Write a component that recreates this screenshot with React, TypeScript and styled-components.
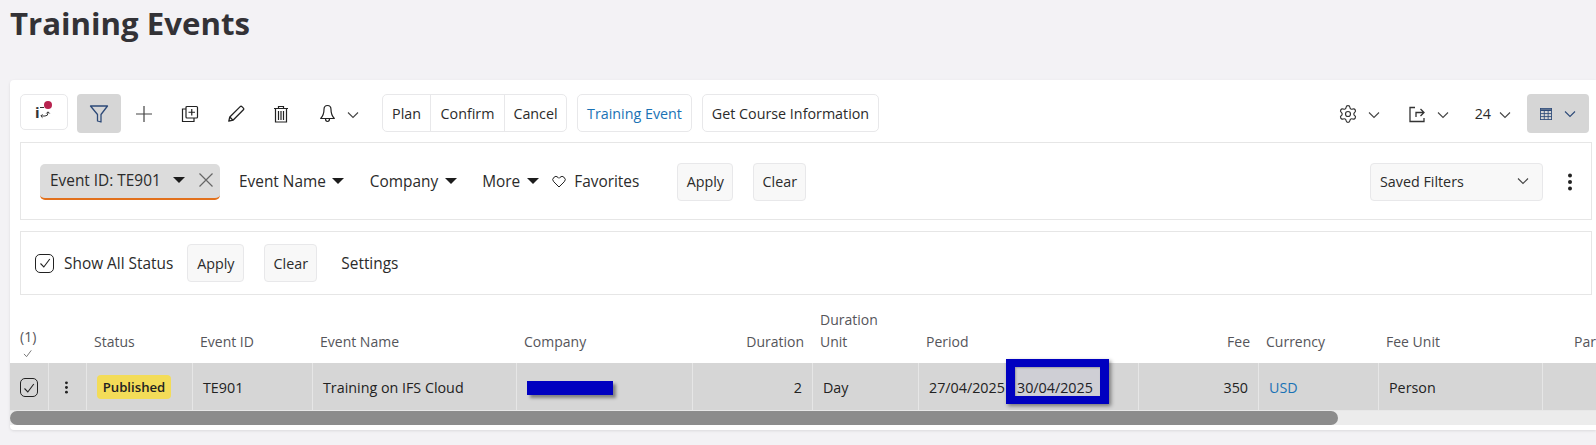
import React from "react";
import styled, { createGlobalStyle } from "styled-components";
import { Settings } from "lucide-react";

const Global = createGlobalStyle`
  html, body { margin: 0; padding: 0; background: #f3f2f5; overflow: hidden; }
  body { font-family: "Open Sans", "Liberation Sans", sans-serif; color: #2b2b2b; }
  * { box-sizing: border-box; }
`;

const Page = styled.div`
  width: 1596px;
  height: 445px;
  overflow: hidden;
`;
const Title = styled.h1`
  margin: 0;
  padding: 2px 0 0 10px;
  height: 80px;
  font-size: 31.2px;
  line-height: 42px;
  font-weight: 700;
  color: #333236;
`;
const Card = styled.section`
  margin-left: 10px;
  height: 350px;
  background: #fff;
  border-radius: 4px 0 0 4px;
  box-shadow: 0 1px 3px rgba(0, 0, 0, 0.1);
  padding: 14px 4px 0 10px;
`;
const Toolbar = styled.div`
  display: flex;
  align-items: flex-start;
  height: 39px;
  padding-right: 3px;
`;
const LogoButton = styled.div`
  width: 48px;
  height: 36px;
  margin-right: 9px;
  border: 1px solid #e8e8ea;
  border-radius: 5px;
  display: flex;
  align-items: center;
  justify-content: center;
`;
const FilterToggle = styled.div`
  width: 44px;
  height: 39px;
  background: #d6d6d6;
  border-radius: 4px;
  display: flex;
  align-items: center;
  justify-content: center;
`;
const IconButton = styled.div<{ $w?: number }>`
  width: ${(p) => p.$w ?? 46}px;
  height: 39px;
  display: flex;
  align-items: center;
  justify-content: center;
  color: #333;
`;
const ChevronBox = styled.span<{ $ml?: number; $mr?: number }>`
  display: inline-flex;
  align-items: center;
  width: 14px;
  height: 39px;
  margin-left: ${(p) => p.$ml ?? 0}px;
  margin-right: ${(p) => p.$mr ?? 0}px;
  padding-top: 2px;
`;
const ButtonGroup = styled.div`
  display: flex;
  height: 38px;
  border: 1px solid #e8e8ea;
  border-radius: 5px;
`;
const GroupItem = styled.div<{ $w: number }>`
  width: ${(p) => p.$w}px;
  display: flex;
  align-items: center;
  justify-content: center;
  font-size: 14.3px;
  color: #2b2b2b;
  & + & {
    border-left: 1px solid #e8e8ea;
  }
`;
const ActionButton = styled.div<{ $w: number; $link?: boolean }>`
  width: ${(p) => p.$w}px;
  height: 38px;
  margin-left: 10px;
  border: 1px solid #e8e8ea;
  border-radius: 5px;
  display: flex;
  align-items: center;
  justify-content: center;
  font-size: 14.3px;
  color: ${(p) => (p.$link ? "#1a72b5" : "#2b2b2b")};
`;
const RightTools = styled.div`
  margin-left: auto;
  display: flex;
  align-items: center;
  height: 39px;
`;
const PageSize = styled.span`
  font-size: 14.3px;
  margin-right: 7px;
`;
const ViewToggle = styled.div`
  width: 62px;
  height: 39px;
  margin-left: 15px;
  padding-left: 13px;
  background: #d6d6d6;
  border-radius: 4px;
  display: flex;
  align-items: center;
  gap: 11px;
`;
const Panel = styled.div<{ $h: number; $mt: number; $pl: number; $pt?: number }>`
  height: ${(p) => p.$h}px;
  margin-top: ${(p) => p.$mt}px;
  padding-left: ${(p) => p.$pl}px;
  padding-top: ${(p) => p.$pt ?? 0}px;
  border: 1px solid #e6e6e6;
  display: flex;
  align-items: center;
  font-size: 15.4px;
`;
const Chip = styled.div`
  width: 180px;
  height: 36px;
  padding: 0 0 2px 10px;
  display: flex;
  align-items: center;
  background: #dcdcdc;
  border-bottom: 2px solid #e2711d;
  border-radius: 5px;
  white-space: nowrap;
`;
const Caret = styled.span<{ $ml: number }>`
  display: inline-block;
  margin-left: ${(p) => p.$ml}px;
  width: 0;
  height: 0;
  border-left: 6px solid transparent;
  border-right: 6px solid transparent;
  border-top: 6px solid #1c1c1c;
`;
const FilterItem = styled.span<{ $ml: number; $lift?: boolean }>`
  display: inline-flex;
  align-items: center;
  margin-left: ${(p) => p.$ml}px;
  padding-bottom: ${(p) => (p.$lift ? 2 : 0)}px;
  white-space: nowrap;
`;
const FavoriteLabel = styled.span`
  margin-left: 8px;
`;
const FlatButton = styled.div<{ $w: number; $ml: number; $lift?: boolean }>`
  width: ${(p) => p.$w}px;
  height: 38px;
  margin-left: ${(p) => p.$ml}px;
  padding-bottom: ${(p) => (p.$lift ? 2 : 0)}px;
  background: #f8f8f8;
  border: 1px solid #e8e8ea;
  border-radius: 4px;
  display: flex;
  align-items: center;
  justify-content: center;
  font-size: 14.3px;
`;
const SavedFilters = styled.div`
  margin-left: auto;
  width: 173px;
  height: 38px;
  padding: 0 12px 2px 9px;
  background: #f8f8f8;
  border: 1px solid #e8e8ea;
  border-radius: 4px;
  display: flex;
  align-items: center;
  justify-content: space-between;
  font-size: 14.3px;
`;
const PanelKebab = styled.div`
  width: 48px;
  display: flex;
  justify-content: center;
  padding-left: 6px;
`;
const CheckBox = styled.span`
  width: 19px;
  height: 19px;
  border: 1.3px solid #222;
  border-radius: 5px;
  display: inline-flex;
  align-items: center;
  justify-content: center;
  background: transparent;
`;
const ShowAll = styled.span`
  margin-left: 10px;
  white-space: nowrap;
`;

const columns = "38px 38px 106px 120px 204px 176px 120px 106px 220px 120px 120px 164px 54px";

const Table = styled.div`
  margin: 0 -4px 0 -10px;
`;
const HeaderRow = styled.div`
  display: grid;
  grid-template-columns: ${columns};
  height: 68px;
`;
const HeaderCell = styled.div<{ $right?: boolean; $pl?: number }>`
  align-self: end;
  padding: 0 8px 10px ${(p) => p.$pl ?? 8}px;
  font-size: 14px;
  line-height: 22px;
  color: #55555a;
  text-align: ${(p) => (p.$right ? "right" : "left")};
  white-space: nowrap;
`;
const CountCell = styled.div`
  align-self: end;
  padding: 0 0 4px 10px;
  font-size: 14px;
  line-height: 22px;
  color: #55555a;
`;
const CountTick = styled.div`
  padding-left: 2px;
  height: 11px;
  display: flex;
  align-items: flex-start;
`;
const Row = styled.div`
  display: grid;
  grid-template-columns: ${columns};
  height: 48px;
  background: #d6d6d6;
  border-bottom: 1px solid #e8e8e8;
`;
const Cell = styled.div<{ $right?: boolean; $link?: boolean; $center?: boolean; $pl?: number }>`
  display: flex;
  align-items: center;
  justify-content: ${(p) => (p.$right ? "flex-end" : p.$center ? "center" : "flex-start")};
  padding: 2px 10px 0 ${(p) => p.$pl ?? 10}px;
  font-size: 14.3px;
  color: ${(p) => (p.$link ? "#1a72b5" : "#222")};
  white-space: nowrap;
  & + & {
    border-left: 1px solid #e6e6e6;
  }
`;
const Badge = styled.span`
  height: 24px;
  width: 74px;
  margin-bottom: 2px;
  flex: none;
  background: #f3dc58;
  border-radius: 4px;
  display: flex;
  align-items: center;
  justify-content: center;
  font-size: 13.2px;
  font-weight: 600;
  color: #222;
`;
const Redaction = styled.span`
  width: 86px;
  height: 14px;
  background: #0000c0;
  box-shadow: 3px 3px 3px rgba(0, 0, 0, 0.4);
`;
const DateText = styled.span`
  width: 88px;
  position: relative;
  flex: none;
`;
const Highlight = styled.span`
  position: absolute;
  left: -11px;
  top: -19px;
  width: 103px;
  height: 45px;
  background: rgba(0, 0, 192, 0.03);
  border: 8px solid #0000c0;
  border-width: 8px 9px;
  box-shadow: 2px 2px 4px rgba(0, 0, 0, 0.45), inset 1px 1px 2px rgba(0, 0, 0, 0.25);
`;
const ScrollTrack = styled.div`
  height: 14px;
  background: #ececec;
`;
const ScrollThumb = styled.div`
  width: 1328px;
  height: 14px;
  background: #8c8c8c;
  border-radius: 7px;
`;

const Chevron = ({ c = "#444" }: { c?: string }) => (
  <svg width="14" height="8" viewBox="0 0 14 8" fill="none" stroke={c} strokeWidth="1.1">
    <path d="M2 1.500 7 6.500l5-5" />
  </svg>
);
const Kebab = ({ h = 18 }: { h?: number }) => (
  <svg width={(h * 4) / 18} height={h} viewBox="0 0 4 18" fill="#222">
    <circle cx="2" cy="2.500" r="2" />
    <circle cx="2" cy="9" r="2" />
    <circle cx="2" cy="15.500" r="2" />
  </svg>
);
const Tick = ({ s = 14, c = "#222" }: { s?: number; c?: string }) => (
  <svg width={s} height={s} viewBox="0 0 14 14" fill="none" stroke={c} strokeWidth="1.1">
    <path d="M2.500 7.500 5.800 11 11.800 3" />
  </svg>
);

const header: { label: React.ReactNode; right?: boolean; pl?: number }[] = [
  { label: "Status", pl: 8 },
  { label: "Event ID" },
  { label: "Event Name" },
  { label: "Company" },
  { label: "Duration", right: true },
  { label: <>Duration<br />Unit</> },
  { label: "Period" },
  { label: "Fee", right: true },
  { label: "Currency" },
  { label: "Fee Unit" },
  { label: "Par", pl: 32 },
];

export default function App() {
  return (
    <Page>
      <Global />
      <Title>Training Events</Title>
      <Card>
        <Toolbar>
          <LogoButton>
            <svg width="24" height="24" viewBox="0 0 24 24" fill="none">
              <text x="3" y="18" fontFamily="Open Sans" fontWeight="700" fontSize="15" fill="#333">i</text>
              <path d="M8 7.500h4" stroke="#333" strokeWidth="1" />
              <path d="M9 16h4a3 3 0 0 0 3-3v-1M14.300 13.500l1.700-1.700 1.700 1.700M10.500 14.300 8.800 16l1.700 1.700" stroke="#333" strokeWidth="1" />
              <circle cx="16" cy="5" r="4" fill="#b8234f" />
            </svg>
          </LogoButton>
          <FilterToggle>
            <svg width="20" height="20" viewBox="0 0 20 20" fill="none" stroke="#2d4a78" strokeWidth="1.3" strokeLinejoin="round">
              <path d="M1.500 2h17L12 10.500V18l-3.500-1v-6.500z" />
            </svg>
          </FilterToggle>
          <IconButton>
            <svg width="18" height="18" viewBox="0 0 18 18" stroke="#444" strokeWidth="1.2">
              <path d="M9 1v16M1 9h16" />
            </svg>
          </IconButton>
          <IconButton>
            <svg width="18" height="18" viewBox="0 0 18 18" fill="none" stroke="#222" strokeWidth="1.2">
              <path d="M5 4H1.500v12.500H13V13" />
              <rect x="5" y="1.500" width="11.500" height="11.500" rx="1" />
              <path d="M10.750 4v6.500M7.500 7.250H14" />
            </svg>
          </IconButton>
          <IconButton $w={45}>
            <svg width="18" height="18" viewBox="0 0 18 18" fill="none" stroke="#222" strokeWidth="1.3" strokeLinejoin="round">
              <path d="M1.800 16.200 2.800 12 13.200 1.600a1.200 1.200 0 0 1 1.700 0l1.500 1.500a1.200 1.200 0 0 1 0 1.700L6 15.200z" />
              <path d="M2.800 12 6 15.200" />
            </svg>
          </IconButton>
          <IconButton>
            <svg width="16" height="18" viewBox="0 0 16 18" fill="none" stroke="#222" strokeWidth="1.2">
              <path d="M1 3.500h14M5.500 3.500V1.500h5v2M2.500 3.500v13.500h11V3.500" />
              <path d="M5.500 6v9M8 6v9M10.500 6v9" />
            </svg>
          </IconButton>
          <IconButton>
            <svg width="17" height="19" viewBox="0 0 16 19" fill="none" stroke="#222" strokeWidth="1.2" strokeLinejoin="round">
              <path d="M8 1.500c-2.300 0-3.500 1.800-3.500 4 0 4-1 6.500-3.300 9h13.600c-2.300-2.500-3.300-5-3.300-9 0-2.200-1.200-4-3.500-4z" />
              <path d="M6 14.800c0 1.800 1 2.700 2 2.700s2-.9 2-2.700" />
            </svg>
          </IconButton>
          <ChevronBox $ml={-4} $mr={22}><Chevron /></ChevronBox>
          <ButtonGroup>
            <GroupItem $w={47}>Plan</GroupItem>
            <GroupItem $w={74}>Confirm</GroupItem>
            <GroupItem $w={62}>Cancel</GroupItem>
          </ButtonGroup>
          <ActionButton $w={115} $link>Training Event</ActionButton>
          <ActionButton $w={177}>Get Course Information</ActionButton>
          <RightTools>
            <Settings size={20} strokeWidth={1.4} color="#333" />
            <ChevronBox $ml={9} $mr={26}><Chevron /></ChevronBox>
            <svg width="20" height="20" viewBox="0 0 20 20" fill="none" stroke="#333" strokeWidth="1.3">
              <path d="M8 3.500H3v14h14V14" />
              <path d="M9 13V8.500h8M13.500 5 17 8.500 13.500 12" />
            </svg>
            <ChevronBox $ml={9} $mr={25}><Chevron /></ChevronBox>
            <PageSize>24</PageSize>
            <ChevronBox><Chevron /></ChevronBox>
            <ViewToggle>
              <svg width="12" height="12" viewBox="0 0 14 14" fill="none" stroke="#2d4a78" strokeWidth="1">
                <rect x="0.500" y="0.500" width="13" height="13" />
                <path d="M0.500 2.500h13" strokeWidth="2" />
                <path d="M0.500 6.500h13M0.500 10h13M5 3v10.500M9.500 3v10.500" />
              </svg>
              <Chevron c="#2d4a78" />
            </ViewToggle>
          </RightTools>
        </Toolbar>
        <Panel $h={78} $mt={9} $pl={19} $pt={2}>
          <Chip>
            Event ID: TE901
            <Caret $ml={12} />
            <svg width="16" height="16" viewBox="0 0 16 16" stroke="#666" strokeWidth="1.2" style={{ marginLeft: 13 }}>
              <path d="M1.500 1.500l13 13M14.500 1.500l-13 13" />
            </svg>
          </Chip>
          <FilterItem $ml={19} $lift>Event Name<Caret $ml={6} /></FilterItem>
          <FilterItem $ml={26} $lift>Company<Caret $ml={7} /></FilterItem>
          <FilterItem $ml={25} $lift>More<Caret $ml={7} /></FilterItem>
          <FilterItem $ml={13} $lift>
            <svg width="14" height="13" viewBox="0 0 14 13" fill="none" stroke="#222" strokeWidth="1">
              <path d="M7 12 1.800 6.800a3 3 0 0 1 0-4.400 3 3 0 0 1 4.300 0L7 3.300l.9-.9a3 3 0 0 1 4.300 0 3 3 0 0 1 0 4.400z" />
            </svg>
            <FavoriteLabel>Favorites</FavoriteLabel>
          </FilterItem>
          <FlatButton $w={56} $ml={38} $lift>Apply</FlatButton>
          <FlatButton $w={53} $ml={20} $lift>Clear</FlatButton>
          <SavedFilters>Saved Filters<Chevron /></SavedFilters>
          <PanelKebab><Kebab /></PanelKebab>
        </Panel>
        <Panel $h={64} $mt={11} $pl={14}>
          <CheckBox><Tick /></CheckBox>
          <ShowAll>Show All Status</ShowAll>
          <FlatButton $w={57} $ml={14}>Apply</FlatButton>
          <FlatButton $w={53} $ml={20}>Clear</FlatButton>
          <FilterItem $ml={24}>Settings</FilterItem>
        </Panel>
        <Table>
          <HeaderRow>
            <CountCell>
              (1)
              <CountTick><Tick s={11} c="#666" /></CountTick>
            </CountCell>
            <div />
            {header.map((h, i) => (
              <HeaderCell key={i} $right={h.right} $pl={h.pl}>{h.label}</HeaderCell>
            ))}
          </HeaderRow>
          <Row>
            <Cell $center><CheckBox><Tick /></CheckBox></Cell>
            <Cell $center $pl={8}><Kebab h={13} /></Cell>
            <Cell $pl={10}><Badge>Published</Badge></Cell>
            <Cell>TE901</Cell>
            <Cell>Training on IFS Cloud</Cell>
            <Cell><Redaction /></Cell>
            <Cell $right>2</Cell>
            <Cell>Day</Cell>
            <Cell>
              <DateText>27/04/2025</DateText>
              <DateText>
                30/04/2025
                <Highlight />
              </DateText>
            </Cell>
            <Cell $right>350</Cell>
            <Cell $link>USD</Cell>
            <Cell>Person</Cell>
            <Cell />
          </Row>
          <ScrollTrack><ScrollThumb /></ScrollTrack>
        </Table>
      </Card>
    </Page>
  );
}
